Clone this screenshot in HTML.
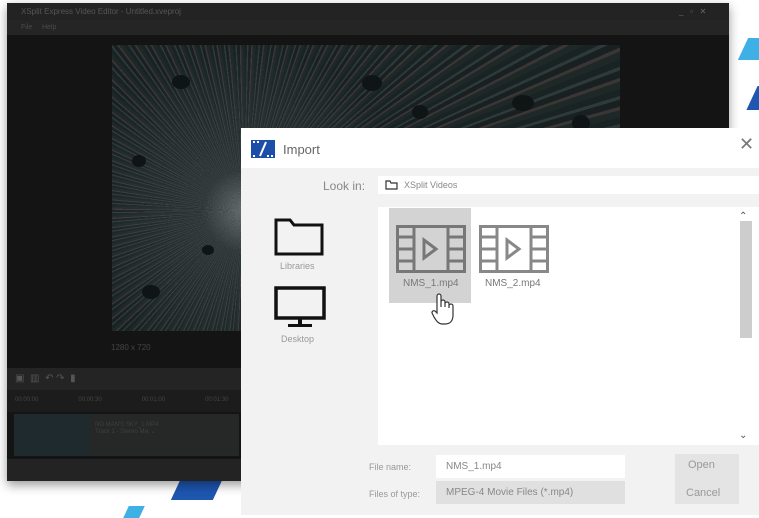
<!DOCTYPE html>
<html><head><style>
*{margin:0;padding:0;box-sizing:border-box}
body{width:759px;height:515px;background:#fff;position:relative;overflow:hidden;font-family:"Liberation Sans",sans-serif}
.abs{position:absolute}
.rock{position:absolute;background:#0f1414;border-radius:50%}
</style></head><body>
<div class="abs" style="left:743px;top:38px;width:30px;height:22px;background:#3fb0e6;transform:skewX(-25deg)"></div>
<div class="abs" style="left:752px;top:86px;width:30px;height:24px;background:#1e56b0;transform:skewX(-25deg)"></div>
<div class="abs" style="left:176px;top:478px;width:42px;height:22px;background:#1e56b0;transform:skewX(-25deg)"></div>
<div class="abs" style="left:126px;top:506px;width:16px;height:12px;background:#3fb0e6;transform:skewX(-25deg)"></div>
<div class="abs" style="left:7px;top:3px;width:722px;height:478px;background:#141414;box-shadow:0 4px 10px rgba(0,0,0,.4)">
 <div class="abs" style="left:0;top:0;width:722px;height:17px;background:#232323;color:#555;font-size:8px;line-height:17px;padding-left:14px">XSplit Express Video Editor - Untitled.xveproj
  <span class="abs" style="left:672px;top:0;color:#666">_ &nbsp; ▫ &nbsp; ✕</span></div>
 <div class="abs" style="left:0;top:17px;width:722px;height:15px;background:#252525;color:#4a4a4a;font-size:7px;line-height:15px;padding-left:14px">File &nbsp; &nbsp; Help</div>
 <div class="abs" style="left:105px;top:42px;width:508px;height:286px;overflow:hidden;background:
  radial-gradient(circle at 26% 58%, rgba(200,210,210,.4) 0, rgba(120,130,130,.2) 10%, rgba(0,0,0,0) 40%),
  repeating-conic-gradient(from 0deg at 26% 58%, #1a2324 0deg 1deg, #2e3a39 1deg 1.5deg, #182022 1.5deg 2.5deg, #3a3636 2.5deg 3deg, #1d2827 3deg 4deg);">
  <div class="rock" style="left:60px;top:30px;width:18px;height:14px"></div>
  <div class="rock" style="left:250px;top:30px;width:20px;height:16px"></div>
  <div class="rock" style="left:300px;top:60px;width:16px;height:14px"></div>
  <div class="rock" style="left:400px;top:50px;width:22px;height:16px"></div>
  <div class="rock" style="left:20px;top:110px;width:14px;height:12px"></div>
  <div class="rock" style="left:30px;top:240px;width:18px;height:14px"></div>
  <div class="rock" style="left:90px;top:200px;width:12px;height:10px"></div>
  <div class="rock" style="left:460px;top:70px;width:18px;height:16px"></div>
 </div>
 <div class="abs" style="left:104px;top:340px;color:#444;font-size:8px">1280 x 720</div>
 <div class="abs" style="left:0;top:365px;width:722px;height:22px;background:#242424;color:#555;font-size:10px;line-height:22px;padding-left:8px">▣ &nbsp;▥ &nbsp;↶ ↷ &nbsp;▮</div>
 <div class="abs" style="left:0;top:387px;width:722px;height:22px;background:#1c1c1c;color:#444;font-size:6px;padding:7px 0 0 8px">00:00:00<span style="margin-left:40px">00:00:30</span><span style="margin-left:40px">00:01:00</span><span style="margin-left:40px">00:01:30</span></div>
 <div class="abs" style="left:7px;top:411px;width:75px;height:42px;background:#1f2a2e"></div>
 <div class="abs" style="left:82px;top:411px;width:150px;height:42px;background:#262828;color:#3e3e3e;font-size:6px;padding:8px 6px">NO MAN'S SKY_1.MP4<br>Track 1 - Stereo Mix ⌄</div>
 <div class="abs" style="left:0;top:456px;width:722px;height:22px;background:#232323"></div>
</div>
<div class="abs" style="left:241px;top:128px;width:518px;height:387px;background:#f2f2f2">
 <div class="abs" style="left:0;top:0;width:518px;height:40px;background:#fff"></div>
 <svg class="abs" style="left:10px;top:12px" width="24" height="18" viewBox="0 0 24 18"><rect x="0" y="0" width="24" height="18" fill="#1e4fa8"/><path d="M9 16 L15 2" stroke="#fff" stroke-width="2"/><g fill="#fff"><rect x="2" y="1" width="2" height="2"/><rect x="6" y="1" width="2" height="2"/><rect x="2" y="15" width="2" height="2"/><rect x="16" y="15" width="2" height="2"/><rect x="20" y="15" width="2" height="2"/></g></svg>
 <div class="abs" style="left:42px;top:14px;font-size:13px;color:#666">Import</div>
 <div class="abs" style="left:498px;top:6px;font-size:18px;color:#777">✕</div>
 <div class="abs" style="left:82px;top:51px;font-size:12px;color:#888">Look in:</div>
 <div class="abs" style="left:137px;top:48px;width:381px;height:18px;background:#fff"></div>
 <svg class="abs" style="left:144px;top:52px" width="13" height="10"><path d="M1 1h4l1 2h6v6H1z" fill="none" stroke="#333" stroke-width="1.2"/></svg>
 <div class="abs" style="left:163px;top:52px;font-size:9px;color:#888">XSplit Videos</div>
 <svg class="abs" style="left:33px;top:88px" width="52" height="40"><path d="M2 4h14l4 5h28v29H2z" fill="none" stroke="#111" stroke-width="3"/></svg>
 <div class="abs" style="left:39px;top:133px;font-size:9px;color:#999">Libraries</div>
 <svg class="abs" style="left:33px;top:158px" width="54" height="44"><rect x="2" y="2" width="48" height="30" fill="none" stroke="#111" stroke-width="3.5"/><rect x="24" y="32" width="4" height="6" fill="#111"/><rect x="14" y="38" width="24" height="3" fill="#111"/></svg>
 <div class="abs" style="left:40px;top:206px;font-size:9px;color:#999">Desktop</div>
 <div class="abs" style="left:137px;top:79px;width:381px;height:238px;background:#fff"></div>
 <div class="abs" style="left:148px;top:80px;width:82px;height:95px;background:#d3d3d3"></div>
 <svg class="abs" style="left:155px;top:97px" width="70" height="48" viewBox="0 0 70 48"><rect x="1.5" y="1.5" width="67" height="45" fill="none" stroke="#777" stroke-width="3"/><path d="M18 1v46M52 1v46M1 12h17M1 24h17M1 36h17M52 12h17M52 24h17M52 36h17" stroke="#777" stroke-width="3"/><path d="M28 15l12 9-12 9z" fill="none" stroke="#777" stroke-width="3"/></svg>
 <svg class="abs" style="left:238px;top:97px" width="70" height="48" viewBox="0 0 70 48"><rect x="1.5" y="1.5" width="67" height="45" fill="#fff" stroke="#888" stroke-width="3"/><path d="M18 1v46M52 1v46M1 12h17M1 24h17M1 36h17M52 12h17M52 24h17M52 36h17" stroke="#888" stroke-width="3"/><path d="M28 15l12 9-12 9z" fill="none" stroke="#888" stroke-width="3"/></svg>
 <div class="abs" style="left:162px;top:150px;font-size:10px;color:#777">NMS_1.mp4</div>
 <div class="abs" style="left:244px;top:150px;font-size:10px;color:#777">NMS_2.mp4</div>
 <svg class="abs" style="left:189px;top:165px" width="26" height="34"><path d="M7 20V3a2 2 0 0 1 4 0v11V9a2 2 0 0 1 4 0v5V11a2 2 0 0 1 4 0v4v-2a2 2 0 0 1 4 0v9c0 6-3 9-8 9h-3c-4 0-6-4-8-7l-2-4a2 2 0 0 1 3-2z" fill="#fff" stroke="#333" stroke-width="1.2"/></svg>
 <div class="abs" style="left:498px;top:83px;font-size:10px;color:#555">⌃</div>
 <div class="abs" style="left:499px;top:93px;width:12px;height:117px;background:#cdcdcd"></div>
 <div class="abs" style="left:498px;top:302px;font-size:10px;color:#555">⌄</div>
 <div class="abs" style="left:128px;top:334px;font-size:9px;color:#999">File name:</div>
 <div class="abs" style="left:195px;top:327px;width:189px;height:23px;background:#fff;font-size:10px;color:#888;padding:6px 10px">NMS_1.mp4</div>
 <div class="abs" style="left:128px;top:361px;font-size:9px;color:#999">Files of type:</div>
 <div class="abs" style="left:195px;top:353px;width:189px;height:23px;background:#e0e0e0;font-size:10px;color:#888;padding:6px 10px">MPEG-4 Movie Files (*.mp4)</div>
 <div class="abs" style="left:434px;top:326px;width:64px;height:50px;background:#e4e4e4"></div>
 <div class="abs" style="left:447px;top:331px;font-size:11px;color:#999">Open</div>
 <div class="abs" style="left:445px;top:359px;font-size:11px;color:#999">Cancel</div>
</div>
</body></html>
